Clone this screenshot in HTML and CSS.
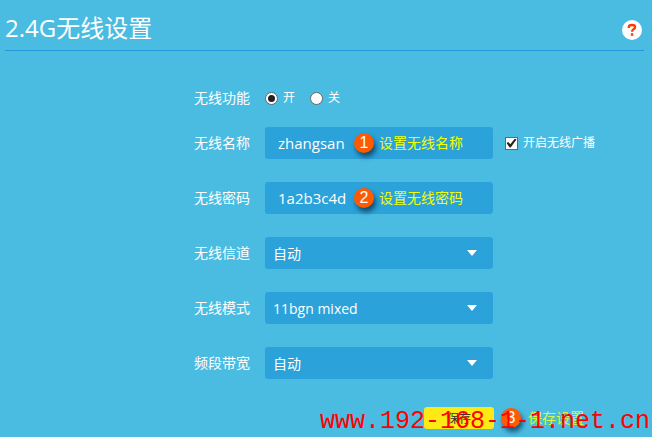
FILE: index.html
```html
<!DOCTYPE html>
<html lang="zh-CN">
<head>
    <meta charset="utf-8">
    <title>2.4G无线设置</title>
    <link rel="stylesheet" href="styles.css">
</head>
<body>
    <header class="header">
        <h1>2.4G无线设置</h1>
        <button type="button" class="help" aria-label="帮助">
            <svg width="20" height="20" viewBox="0 0 20 20">
                <circle cx="10" cy="10" r="10" fill="#fff"/>
                <path d="M6.8 8V6.6Q7.2 5 10 5Q13.1 5 13.1 7.2Q13.1 8.4 11.5 9.3Q10.1 10.1 10.1 11.8" fill="none" stroke="#ff3c00" stroke-width="2.3"/>
                <rect x="8.9" y="13.2" width="2.4" height="2.6" fill="#ff3c00"/>
            </svg>
        </button>
    </header>

    <form class="settings">
        <div class="row radio-row" role="radiogroup" aria-labelledby="power-label">
            <span class="label" id="power-label">无线功能</span>
            <label class="option"><input type="radio" name="power" checked>开</label>
            <label class="option"><input type="radio" name="power">关</label>
        </div>

        <div class="row">
            <label class="label" for="ssid">无线名称</label>
            <div class="field">
                <input class="control" type="text" id="ssid" value="zhangsan">
                <div class="note"><span class="badge">1</span>设置无线名称</div>
            </div>
            <label class="option broadcast"><input type="checkbox" checked>开启无线广播</label>
        </div>

        <div class="row">
            <label class="label" for="password">无线密码</label>
            <div class="field">
                <input class="control" type="text" id="password" value="1a2b3c4d">
                <div class="note"><span class="badge">2</span>设置无线密码</div>
            </div>
        </div>

        <div class="row">
            <label class="label" for="channel">无线信道</label>
            <div class="field select">
                <select class="control" id="channel"><option>自动</option></select>
            </div>
        </div>

        <div class="row">
            <label class="label" for="mode">无线模式</label>
            <div class="field select">
                <select class="control" id="mode"><option>11bgn mixed</option></select>
            </div>
        </div>

        <div class="row">
            <label class="label" for="bandwidth">频段带宽</label>
            <div class="field select">
                <select class="control" id="bandwidth"><option>自动</option></select>
            </div>
        </div>

        <div class="actions">
            <button type="button" class="save">保存</button>
            <span class="badge">3</span>
            <span class="save-note">保存设置</span>
        </div>
    </form>

    <div class="watermark">www.192-168-1-1.net.cn</div>
</body>
</html>
```

FILE: styles.css
```css
* {
    box-sizing: border-box;
}
body {
    position: relative;
    margin: 0;
    padding: 0 8px 0 5px;
    min-height: 100vh;
    overflow: hidden;
    background-color: #4bbce1;
    color: #fff;
    font-family: "Open Sans", "Noto Sans CJK SC", sans-serif;
    font-size: 14px;
}
input, select, button {
    font-family: inherit;
    color: inherit;
}
.header {
    display: flex;
    justify-content: space-between;
    height: 51px;
    padding-top: 10px;
    border-bottom: 1px solid #2398dc;
}
h1 {
    margin: 0;
    font-size: 24px;
    font-weight: 400;
    line-height: 36px;
}
.help {
    align-self: flex-start;
    height: 20px;
    margin: 10px 2px 0 0;
    padding: 0;
    border: 0;
    background: none;
}
.settings {
    display: flex;
    flex-direction: column;
    gap: 23px;
    padding: 41px 0 0 189px;
}
.row {
    display: flex;
    align-items: center;
    height: 32px;
}
.radio-row {
    height: 12px;
}
.label {
    width: 71px;
    line-height: 22px;
}
.field {
    position: relative;
    width: 228px;
}
.control {
    display: block;
    width: 100%;
    height: 32px;
    padding: 0 13px;
    border: 0;
    border-radius: 3px;
    background-color: #2ba2da;
    font-size: 15px;
    appearance: none;
}
.select .control {
    padding: 0 8px;
    font-size: 14px;
}
.select::after {
    content: "";
    position: absolute;
    top: 13px;
    right: 16px;
    border: 5px solid transparent;
    border-top: 6px solid #fff;
    border-bottom: 0;
}
.option {
    display: flex;
    align-items: center;
    gap: 5px;
    margin-right: 15px;
    font-size: 12px;
    line-height: 18px;
}
.option input {
    appearance: none;
    display: grid;
    place-items: center;
    width: 13px;
    height: 13px;
    margin: 0;
    border: 1px solid #666;
    background-color: #fff;
}
.option input[type="radio"] {
    border-radius: 50%;
}
.option input[type="radio"]:checked::after {
    content: "";
    width: 7px;
    height: 7px;
    border-radius: 50%;
    background-color: #222;
}
.broadcast {
    margin: 0 0 0 12px;
}
.option input[type="checkbox"]:checked::after {
    content: "";
    width: 10px;
    height: 9px;
    background-color: #222;
    clip-path: polygon(0 50%, 18% 38%, 38% 65%, 84% 0, 100% 12%, 42% 100%, 32% 100%);
}
.note {
    position: absolute;
    top: 6px;
    left: 89px;
    display: flex;
    align-items: center;
    gap: 5px;
    color: #f0ff00;
    line-height: 20px;
}
.badge {
    width: 20px;
    height: 20px;
    border-radius: 50%;
    background-color: #ff5a00;
    box-shadow: 2px 4px 5px rgba(0, 40, 70, 0.7);
    color: #fff;
    font-family: "Liberation Sans", sans-serif;
    font-size: 16px;
    line-height: 20px;
    text-align: center;
}
.actions {
    display: flex;
    align-items: center;
    gap: 7px;
    margin-top: 5px;
    padding-left: 230px;
}
.save {
    width: 70px;
    height: 22px;
    padding: 0;
    border: 0;
    border-radius: 3px;
    background-color: #fdea14;
    color: #333;
    font-size: 12px;
}
.save-note {
    color: #d8f646;
    line-height: 20px;
}
.watermark {
    position: absolute;
    right: 2px;
    bottom: 0;
    color: #f00;
    font-family: "Liberation Mono", monospace;
    font-size: 25px;
    line-height: 30px;
}
```
